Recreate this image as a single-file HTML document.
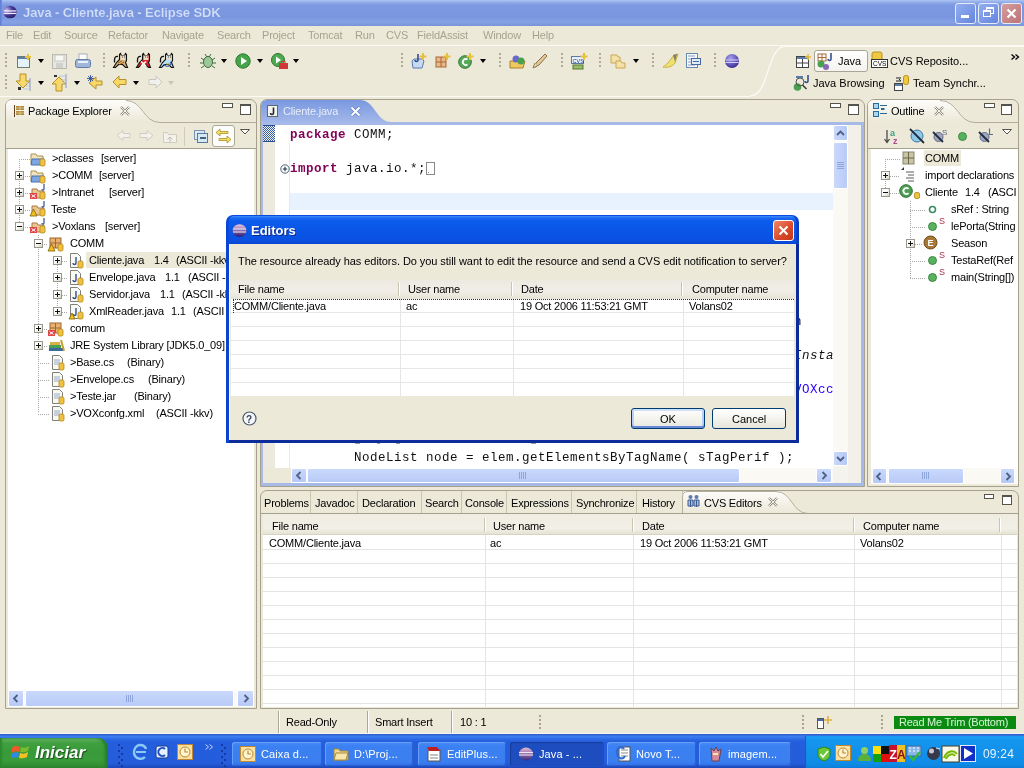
<!DOCTYPE html>
<html><head><meta charset="utf-8">
<style>
*{margin:0;padding:0;box-sizing:border-box}
html,body{width:1024px;height:768px;overflow:hidden;background:#ECE9D8;font-family:"Liberation Sans",sans-serif;font-size:11px;color:#000;position:relative}
.a{position:absolute}
.t{position:absolute;white-space:nowrap;line-height:13px;letter-spacing:-0.2px}
.mono{position:absolute;white-space:nowrap;font-family:"Liberation Mono",monospace;font-size:12.5px;letter-spacing:0.5px;line-height:17px;color:#111}
.kw{color:#7F0055;font-weight:bold}
.menu{color:#A6A491;top:29px}
.panel{position:absolute;border:1px solid #A5A18E;background:#ECE9D8;border-radius:7px 7px 0 0}
.white{position:absolute;background:#fff}
.exp{position:absolute;width:9px;height:9px;border:1px solid #98978C;background:linear-gradient(135deg,#fff 40%,#D6D3C6);}
.exp:before{content:"";position:absolute;left:1px;top:3px;width:5px;height:1px;background:#111}
.exp.p:after{content:"";position:absolute;left:3px;top:1px;width:1px;height:5px;background:#111}
.dv{position:absolute;width:1px;border-left:1px dotted #A8A8A8}
.dh{position:absolute;height:1px;border-top:1px dotted #A8A8A8}
.sbtn{position:absolute;background:linear-gradient(90deg,#C6D5FB,#B9CBF6);border:1px solid #fff;border-radius:2px;box-shadow:0 0 0 1px #D8E2F8}
.gh{position:absolute;height:1px;background:#EBEAE3}
.gv{position:absolute;width:1px;background:#EBEAE3}
.grip{position:absolute;width:2px;height:16px;background:repeating-linear-gradient(#B3AF9C 0 2px,transparent 2px 4px)}
.dd{position:absolute;width:0;height:0;border-left:3px solid transparent;border-right:3px solid transparent;border-top:3px solid #000}
.minb{position:absolute;width:11px;height:5px;border:1px solid #55544C;background:#fff}
.maxb{position:absolute;width:11px;height:11px;border:1px solid #55544C;border-top-width:2px;background:#fff}
svg{position:absolute;overflow:visible}
</style></head><body>

<div style="position:absolute;left:0;top:0;width:1024px;height:768px;overflow:hidden;will-change:transform">
<div class="a" style="left:0px;top:0px;width:1024px;height:26px;background:linear-gradient(#AEC5F3 0,#94AEEA 2px,#7D99E1 5px,#7A96DF 17px,#86A2E5 22px,#7C97DD 25px,#7E93D4 26px)"></div>
<div class="a" style="left:0px;top:0px;width:2px;height:26px;background:linear-gradient(90deg,#5F7AD2,#7591DC)"></div>
<svg style="left:3px;top:5px" width="15" height="14" viewBox="0 0 15 14"><defs><radialGradient id="eg" cx="0.25" cy="0.35" r="0.9"><stop offset="0" stop-color="#C8C0F0"/><stop offset="0.45" stop-color="#4A3C98"/><stop offset="1" stop-color="#1C1458"/></radialGradient></defs><ellipse cx="7" cy="7" rx="6.8" ry="6.3" fill="url(#eg)"/><rect x="0.5" y="5.3" width="13" height="1.3" fill="#EEE8FF"/><rect x="0.5" y="7.8" width="13" height="1.3" fill="#EEE8FF"/></svg>
<div class="t" style="left:23px;top:5px;font-size:13px;font-weight:bold;color:#D3DEF7;line-height:16px;letter-spacing:-0.1px;-webkit-text-stroke:0.15px #7C98E0">Java - Cliente.java - Eclipse SDK</div>
<div class="a" style="left:955px;top:3px;width:21px;height:21px;border:1px solid #E6EBFA;border-radius:3px;background:linear-gradient(135deg,#93AFF0,#6585DD)"></div>
<div class="a" style="left:978px;top:3px;width:21px;height:21px;border:1px solid #E6EBFA;border-radius:3px;background:linear-gradient(135deg,#93AFF0,#6585DD)"></div>
<div class="a" style="left:961px;top:15px;width:8px;height:3px;background:#fff"></div>
<div class="a" style="left:986px;top:7px;width:8px;height:7px;border:1px solid #fff;border-top-width:2px"></div>
<div class="a" style="left:983px;top:10px;width:8px;height:7px;border:1px solid #fff;border-top-width:2px;background:#7C98E2"></div>
<div class="a" style="left:1001px;top:3px;width:21px;height:21px;border:1px solid #E6EBFA;border-radius:3px;background:linear-gradient(135deg,#D69C9C,#BC7478)"></div>
<svg style="left:1005px;top:7px" width="13" height="13" viewBox="0 0 13 13"><path d="M2.5 2.5L10.5 10.5M10.5 2.5L2.5 10.5" stroke="#fff" stroke-width="2.2"/></svg>
<div class="t menu" style="left:6px">File</div>
<div class="t menu" style="left:33px">Edit</div>
<div class="t menu" style="left:64px">Source</div>
<div class="t menu" style="left:108px">Refactor</div>
<div class="t menu" style="left:162px">Navigate</div>
<div class="t menu" style="left:217px">Search</div>
<div class="t menu" style="left:262px">Project</div>
<div class="t menu" style="left:308px">Tomcat</div>
<div class="t menu" style="left:355px">Run</div>
<div class="t menu" style="left:386px">CVS</div>
<div class="t menu" style="left:417px">FieldAssist</div>
<div class="t menu" style="left:483px">Window</div>
<div class="t menu" style="left:532px">Help</div>
<div class="a" style="left:0px;top:45px;width:786px;height:1px;background:#FBFAF5"></div>
<div class="a" style="left:786px;top:45px;width:238px;height:2px;background:#FBFAF5"></div>
<div class="a" style="left:0px;top:96px;width:750px;height:1px;background:#FBFAF5"></div>
<svg style="left:748px;top:45px" width="40" height="52" viewBox="0 0 40 52"><path d="M2 51 C 22 51, 18 1, 38 1" stroke="#FBFAF5" stroke-width="1.3" fill="none"/></svg>
<div class="a" style="left:5px;top:53px;width:2px;height:16px;background:repeating-linear-gradient(#B0AC98 0 2px,transparent 2px 4px)"></div>
<div class="a" style="left:103px;top:53px;width:2px;height:16px;background:repeating-linear-gradient(#B0AC98 0 2px,transparent 2px 4px)"></div>
<div class="a" style="left:188px;top:53px;width:2px;height:16px;background:repeating-linear-gradient(#B0AC98 0 2px,transparent 2px 4px)"></div>
<div class="a" style="left:401px;top:53px;width:2px;height:16px;background:repeating-linear-gradient(#B0AC98 0 2px,transparent 2px 4px)"></div>
<div class="a" style="left:499px;top:53px;width:2px;height:16px;background:repeating-linear-gradient(#B0AC98 0 2px,transparent 2px 4px)"></div>
<div class="a" style="left:561px;top:53px;width:2px;height:16px;background:repeating-linear-gradient(#B0AC98 0 2px,transparent 2px 4px)"></div>
<div class="a" style="left:599px;top:53px;width:2px;height:16px;background:repeating-linear-gradient(#B0AC98 0 2px,transparent 2px 4px)"></div>
<div class="a" style="left:652px;top:53px;width:2px;height:16px;background:repeating-linear-gradient(#B0AC98 0 2px,transparent 2px 4px)"></div>
<div class="a" style="left:714px;top:53px;width:2px;height:16px;background:repeating-linear-gradient(#B0AC98 0 2px,transparent 2px 4px)"></div>
<div class="a" style="left:5px;top:75px;width:2px;height:16px;background:repeating-linear-gradient(#B0AC98 0 2px,transparent 2px 4px)"></div>
<svg style="left:17px;top:54px" width="15" height="14" viewBox="0 0 15 14"><rect x="0.5" y="2.5" width="12" height="11" fill="#E4F2FA" stroke="#6F7A73"/><rect x="1" y="3" width="11" height="2" fill="#5C7FA8"/><path d="M11 0v6M8 3h6" stroke="#E8C040" stroke-width="2"/></svg>
<div class="dd" style="left:38px;top:59px;border-top-color:#000;border-left-width:3px;border-right-width:3px;border-top-width:4px"></div>
<svg style="left:52px;top:54px" width="15" height="15" viewBox="0 0 15 15"><rect x="0.5" y="0.5" width="14" height="14" fill="#E6E6E2" stroke="#B8B8B0"/><rect x="3" y="1" width="9" height="6" fill="#F8F8F6" stroke="#C8C8C0"/><rect x="4" y="9" width="7" height="5" fill="#D0D0CC"/></svg>
<svg style="left:75px;top:53px" width="16" height="16" viewBox="0 0 16 16"><rect x="4" y="1" width="8" height="6" fill="#fff" stroke="#A8B0B8"/><rect x="0.5" y="6.5" width="15" height="8" rx="2" fill="#9FB6D8" stroke="#5F7BA8"/><rect x="3" y="8" width="10" height="2" fill="#E8F0F8"/></svg>
<svg style="left:113px;top:53px" width="16" height="16" viewBox="0 0 16 16"><path d="M6.5 1.5L7.5 0.5 8.5 2.5H11.5L12.5 0.5 13.5 1.5V7.5L12.5 9.5 14.5 14.5H12.5L9.5 11.5H5.5L2.5 14.5H0.5L3.5 9.5Q5.5 7.5 6.5 6.5Z" fill="#D8B070" stroke="#111" stroke-width="1.1"/><path d="M5 3.5Q1.5 3 1.5 7V9.5" stroke="#111" stroke-width="1.3" fill="none"/><rect x="7.5" y="2.5" width="5" height="4.5" fill="#E8DCC8"/><path d="M9 4h.8M11 4h.8" stroke="#222"/><path d="M5 10l4-2M6 12l5-3" stroke="#8A5A20" stroke-width="0.9"/></svg>
<svg style="left:136px;top:53px" width="16" height="16" viewBox="0 0 16 16"><path d="M6.5 1.5L7.5 0.5 8.5 2.5H11.5L12.5 0.5 13.5 1.5V7.5L12.5 9.5 14.5 14.5H12.5L9.5 11.5H5.5L2.5 14.5H0.5L3.5 9.5Q5.5 7.5 6.5 6.5Z" fill="#E02828" stroke="#111" stroke-width="1.1"/><path d="M5 3.5Q1.5 3 1.5 7V9.5" stroke="#111" stroke-width="1.3" fill="none"/><rect x="7.5" y="2.5" width="5" height="4.5" fill="#E8DCC8"/><path d="M9 4h.8M11 4h.8" stroke="#222"/><path d="M5 8.5l5 4.5M10 8.5l-5 4.5" stroke="#fff" stroke-width="1.6"/></svg>
<svg style="left:159px;top:53px" width="16" height="16" viewBox="0 0 16 16"><path d="M6.5 1.5L7.5 0.5 8.5 2.5H11.5L12.5 0.5 13.5 1.5V7.5L12.5 9.5 14.5 14.5H12.5L9.5 11.5H5.5L2.5 14.5H0.5L3.5 9.5Q5.5 7.5 6.5 6.5Z" fill="#B8E0F8" stroke="#111" stroke-width="1.1"/><path d="M5 3.5Q1.5 3 1.5 7V9.5" stroke="#111" stroke-width="1.3" fill="none"/><rect x="7.5" y="2.5" width="5" height="4.5" fill="#E8DCC8"/><path d="M9 4h.8M11 4h.8" stroke="#222"/><path d="M5 11a3.5 2.5 0 1 0 6 -2" stroke="#2A5AA8" stroke-width="1.1" fill="none"/><path d="M7 11h4" stroke="#C8A030"/></svg>
<svg style="left:200px;top:53px" width="15" height="16" viewBox="0 0 15 16"><ellipse cx="8" cy="9" rx="4.5" ry="5.5" fill="#9CC89A" stroke="#3E6B3C"/><path d="M1 5l3 2M15 5l-3 2M0 10h3M13 10h3M1 15l3-2M15 15l-3-2M5 1l2 3M11 1l-2 3" stroke="#3E6B3C"/></svg>
<div class="dd" style="left:221px;top:59px;border-top-color:#000;border-left-width:3px;border-right-width:3px;border-top-width:4px"></div>
<svg style="left:235px;top:53px" width="16" height="16" viewBox="0 0 16 16"><circle cx="8" cy="8" r="7.2" fill="#45A348" stroke="#2A7A30"/><path d="M6 4l6 4-6 4z" fill="#fff"/></svg>
<div class="dd" style="left:257px;top:59px;border-top-color:#000;border-left-width:3px;border-right-width:3px;border-top-width:4px"></div>
<svg style="left:271px;top:53px" width="17" height="17" viewBox="0 0 17 17"><circle cx="7" cy="7" r="6.5" fill="#4FA852" stroke="#2A7A30"/><path d="M5 3.5l5 3.5-5 3.5z" fill="#fff"/><rect x="8" y="10" width="9" height="6" fill="#D03838"/><rect x="11" y="8.5" width="3" height="2" fill="none" stroke="#D03838"/></svg>
<div class="dd" style="left:293px;top:59px;border-top-color:#000;border-left-width:3px;border-right-width:3px;border-top-width:4px"></div>
<svg style="left:411px;top:53px" width="16" height="16" viewBox="0 0 16 16"><path d="M1 8l2-2h8l2 2-2 7H2z" fill="#C8DAF0" stroke="#5A78B8"/><path d="M7 1v6c0 2-3 2-3 0" stroke="#34508F" stroke-width="1.6" fill="none"/><path d="M12 0v7M8.5 3.5h7" stroke="#E8C040" stroke-width="2"/></svg>
<svg style="left:435px;top:53px" width="16" height="16" viewBox="0 0 16 16"><rect x="1" y="4" width="10" height="10" fill="#E8B888" stroke="#A86838"/><path d="M6 4v10M1 9h10" stroke="#A86838"/><path d="M12 0v7M8.5 3.5h7" stroke="#E8C040" stroke-width="2"/></svg>
<svg style="left:458px;top:53px" width="16" height="16" viewBox="0 0 16 16"><circle cx="7" cy="9" r="6.3" fill="#58A85A" stroke="#2F7432"/><path d="M9.5 6.5a3 3 0 1 0 0 5" stroke="#fff" stroke-width="1.8" fill="none"/><path d="M12 0v7M8.5 3.5h7" stroke="#E8C040" stroke-width="2"/></svg>
<div class="dd" style="left:480px;top:59px;border-top-color:#000;border-left-width:3px;border-right-width:3px;border-top-width:4px"></div>
<svg style="left:509px;top:53px" width="17" height="16" viewBox="0 0 17 16"><path d="M1 8h15l-2 7H1z" fill="#F0C860" stroke="#A88028"/><circle cx="7" cy="6" r="3.5" fill="#6A68C8"/><circle cx="12" cy="8" r="3.5" fill="#48A050"/></svg>
<svg style="left:532px;top:53px" width="16" height="16" viewBox="0 0 16 16"><path d="M13 1l2 2-8 9-4 2 1-4z" fill="#E0C898" stroke="#8A7048"/><path d="M3 10l-2 5 4-2" fill="#F0E8C8" stroke="#8A7048"/></svg>
<svg style="left:571px;top:53px" width="16" height="17" viewBox="0 0 16 17"><rect x="0.5" y="3.5" width="12" height="7" fill="#E8F0F8" stroke="#5A78A8"/><text x="1.5" y="9.5" font-size="5.5" font-family="Liberation Sans" fill="#244080">CVS</text><rect x="2" y="12" width="10" height="4" fill="#98C068" stroke="#587830"/><path d="M13 0v7M9.5 3.5h7" stroke="#E8C040" stroke-width="2"/></svg>
<svg style="left:610px;top:54px" width="17" height="15" viewBox="0 0 17 15"><path d="M1 1h6l1 2h2v6H1z" fill="#F4E0A8" stroke="#C8A850"/><path d="M6 7h5l1 2h3v5H6z" fill="#F4E0A8" stroke="#C8A850"/></svg>
<div class="dd" style="left:633px;top:59px;border-top-color:#000;border-left-width:3px;border-right-width:3px;border-top-width:4px"></div>
<svg style="left:661px;top:53px" width="18" height="16" viewBox="0 0 18 16"><path d="M2 14c4 1 9 0 12-4l3-9-4 1-6 8c-2 2-4 3-5 4z" fill="#F0E070" stroke="#C8B040"/><path d="M12 2l4-1-2 8" fill="#808070"/></svg>
<svg style="left:686px;top:53px" width="15" height="16" viewBox="0 0 15 16"><rect x="0.5" y="0.5" width="11" height="14" fill="#F4F8FC" stroke="#6888B0"/><path d="M2 3h7M2 6h7M2 9h7M2 12h7" stroke="#88A0C0"/><rect x="5.5" y="5.5" width="9" height="6" fill="#E0ECF8" stroke="#4868A0"/><path d="M7 8.5h6" stroke="#4868A0"/></svg>
<svg style="left:724px;top:53px" width="16" height="16" viewBox="0 0 16 16"><defs><radialGradient id="eg2" cx="0.4" cy="0.3" r="0.8"><stop offset="0" stop-color="#A8A0F0"/><stop offset="1" stop-color="#2A208A"/></radialGradient></defs><circle cx="8" cy="8" r="7" fill="url(#eg2)"/><path d="M1.5 7h13M1.5 9.5h13" stroke="#D8D0F8" stroke-width="1"/></svg>
<svg style="left:16px;top:74px" width="15" height="17" viewBox="0 0 15 17"><path d="M4 0h6v7h4l-7 7-7-7h4z" fill="#F8D868" stroke="#B89028"/><rect x="2" y="13" width="3" height="3" fill="#303030"/><path d="M7 15h6M10 9h4M10 12h4" stroke="#B8C8E0"/><path d="M14 4v13" stroke="#8898C0"/></svg>
<div class="dd" style="left:38px;top:81px;border-top-color:#000;border-left-width:3px;border-right-width:3px;border-top-width:4px"></div>
<svg style="left:52px;top:74px" width="15" height="18" viewBox="0 0 15 18"><path d="M4 17h6v-7h4l-7-7-7 7h4z" fill="#F8D868" stroke="#B89028"/><rect x="2" y="1" width="3" height="2" fill="#303030"/><path d="M7 2h6M10 6h4M10 9h4" stroke="#B8C8E0"/><path d="M14 0v14" stroke="#8898C0"/></svg>
<div class="dd" style="left:74px;top:81px;border-top-color:#000;border-left-width:3px;border-right-width:3px;border-top-width:4px"></div>
<svg style="left:87px;top:75px" width="16" height="16" viewBox="0 0 16 16"><path d="M15 6H9V2L2 8l7 6v-4h6z" fill="#F8D868" stroke="#B89028"/><path d="M1 1l5 5M6 1L1 6M3.5 0v7M0 3.5h7" stroke="#3050A0" stroke-width="0.9"/></svg>
<svg style="left:112px;top:75px" width="15" height="14" viewBox="0 0 15 14"><path d="M14 4.5H7V1L1 7l6 6V9.5h7z" fill="#F8D868" stroke="#B89028"/></svg>
<div class="dd" style="left:133px;top:81px;border-top-color:#000;border-left-width:3px;border-right-width:3px;border-top-width:4px"></div>
<svg style="left:148px;top:75px" width="15" height="14" viewBox="0 0 15 14"><path d="M1 4.5h7V1l6 6-6 6V9.5H1z" fill="#F0F0EC" stroke="#C8C8C0"/></svg>
<div class="dd" style="left:168px;top:81px;border-top-color:#C8C6B8;border-left-width:3px;border-right-width:3px;border-top-width:4px"></div>
<svg style="left:796px;top:54px" width="16" height="15" viewBox="0 0 16 15"><rect x="0.5" y="2.5" width="12" height="11" fill="#fff" stroke="#444"/><rect x="1" y="3" width="11" height="2" fill="#5C7FA8"/><path d="M6.5 5v8M1 9h11" stroke="#444"/><path d="M12 0v6M9 3h6" stroke="#E8C040" stroke-width="1.6"/></svg>
<div class="a" style="left:814px;top:50px;width:54px;height:22px;border:1px solid #A8A595;border-radius:3px;background:linear-gradient(#FFFFFF,#F4F3EE)"></div>
<svg style="left:817px;top:53px" width="17" height="17" viewBox="0 0 17 17"><rect x="1" y="1" width="8" height="7" fill="none" stroke="#A86838"/><path d="M5 1v7M1 4.5h8" stroke="#A86838"/><circle cx="4" cy="11" r="3.5" fill="#48A050"/><circle cx="9" cy="14" r="3" fill="#8868B8"/><path d="M14 0v6c0 2-3 2-3 0" stroke="#34508F" stroke-width="1.6" fill="none"/></svg>
<div class="t" style="left:838px;top:55px;letter-spacing:0">Java</div>
<svg style="left:871px;top:51px" width="17" height="17" viewBox="0 0 17 17"><rect x="1" y="1" width="10" height="10" rx="2" fill="#F0C840" stroke="#B89020"/><rect x="0.5" y="8.5" width="16" height="8" fill="#fff" stroke="#333"/><text x="2" y="15" font-size="6.5" font-family="Liberation Sans" fill="#000">CVS</text></svg>
<div class="t" style="left:890px;top:55px;letter-spacing:0">CVS Reposito...</div>
<svg style="left:1011px;top:54px" width="8" height="6" viewBox="0 0 8 6"><path d="M0.5 0.5l3 2.5-3 2.5M4.5 0.5l3 2.5-3 2.5" stroke="#000" stroke-width="1.3" fill="none"/></svg>
<svg style="left:793px;top:74px" width="17" height="17" viewBox="0 0 17 17"><circle cx="4.5" cy="13" r="3.8" fill="#48A050"/><circle cx="7" cy="8" r="4" fill="none" stroke="#555"/><path d="M9.5 11l4 4" stroke="#333" stroke-width="1.5"/><path d="M3 3h7" stroke="#5A78A8" stroke-width="2"/><path d="M15 1v6c0 2-3 2-3 0" stroke="#34508F" stroke-width="1.6" fill="none"/></svg>
<div class="t" style="left:813px;top:77px;letter-spacing:0">Java Browsing</div>
<svg style="left:894px;top:75px" width="16" height="16" viewBox="0 0 16 16"><rect x="0.5" y="8.5" width="8" height="7" fill="#fff" stroke="#444"/><rect x="1" y="9" width="7" height="2" fill="#5C7FA8"/><rect x="9.5" y="0.5" width="5" height="9" rx="2" fill="#F0C840" stroke="#B89020"/><path d="M2 6h5l-2-2M7 3H2" stroke="#222" fill="none"/></svg>
<div class="t" style="left:913px;top:77px;letter-spacing:0">Team Synchr...</div>
<div class="a" style="left:5px;top:99px;width:252px;height:610px;border:1px solid #A5A18E;border-radius:7px 7px 0 0;background:#ECE9D8"></div>
<svg style="left:6px;top:100px" width="250" height="23" viewBox="0 0 250 23"><defs><linearGradient id="tabg" x1="0" y1="0" x2="0" y2="1"><stop offset="0" stop-color="#FDFCFA"/><stop offset="1" stop-color="#ECE9D8"/></linearGradient></defs><path d="M0 22 V6 Q0 0 6 0 H120 C137 0 137 22 154 22 Z" fill="url(#tabg)"/><path d="M120 0.5 C137 0.5 137 22.5 154 22.5 H250" stroke="#B2AE9B" fill="none"/></svg>
<svg style="left:13px;top:105px" width="11" height="12" viewBox="0 0 11 12"><path d="M1.5 0v12" stroke="#604020"/><rect x="3" y="1" width="8" height="4" fill="#B08838"/><rect x="3" y="6" width="8" height="4" fill="#B08838"/><path d="M3 3h8M7 1v9M3 8h8" stroke="#E8D8A8" stroke-width="0.7"/></svg>
<div class="t" style="left:28px;top:105px;">Package Explorer</div>
<svg style="left:120px;top:106px" width="10" height="10" viewBox="0 0 10 10"><path d="M1 1l8 8M9 1L1 9" stroke="#8E8C80" stroke-width="2.4"/><path d="M1 1l8 8M9 1L1 9" stroke="#fff" stroke-width="0.9"/></svg>
<div class="minb" style="left:222px;top:103px;width:11px;height:5px"></div>
<div class="maxb" style="left:240px;top:104px"></div>
<svg style="left:116px;top:130px" width="15" height="11" viewBox="0 0 15 11"><path d="M14 3.5H7V0.5L1 5.5l6 5V7.5h7z" fill="#F2F1EC" stroke="#CFCDC0"/></svg>
<svg style="left:139px;top:130px" width="15" height="11" viewBox="0 0 15 11"><path d="M1 3.5h7V0.5l6 5-6 5V7.5H1z" fill="#F2F1EC" stroke="#CFCDC0"/></svg>
<svg style="left:163px;top:129px" width="14" height="14" viewBox="0 0 14 14"><path d="M0.5 3.5h4l1 2h8v8h-13z" fill="#F2F1EC" stroke="#CFCDC0"/><path d="M7 13V8M4.5 10.5L7 8l2.5 2.5" stroke="#C0BEB0" fill="none"/></svg>
<div class="a" style="left:184px;top:127px;width:1px;height:19px;background:#CFCBB8"></div>
<svg style="left:194px;top:130px" width="14" height="13" viewBox="0 0 14 13"><rect x="0.5" y="0.5" width="10" height="9" fill="#D8E8F4" stroke="#7C94AE"/><rect x="3.5" y="3.5" width="10" height="9" fill="#D4EAF6" stroke="#5B7896"/><path d="M6 8h6" stroke="#1B3350" stroke-width="1.5"/></svg>
<div class="a" style="left:212px;top:125px;width:23px;height:22px;border:1px solid #ABA896;border-radius:3px;background:#FCFCFA"></div>
<svg style="left:215px;top:128px" width="17" height="16" viewBox="0 0 17 16"><path d="M1 4.5L5 1v2.5h8v2H5V8z" fill="#F4E060" stroke="#A8902A" stroke-width="0.8"/><path d="M16 11.5L12 8v2.5H4v2h8V15z" fill="#F4E060" stroke="#A8902A" stroke-width="0.8"/></svg>
<svg style="left:240px;top:129px" width="10" height="6" viewBox="0 0 10 6"><path d="M0.5 0.5h9L5 5z" fill="#fff" stroke="#55544C"/></svg>
<div class="a" style="left:6px;top:148px;width:250px;height:1px;background:#A5A18E"></div>
<div class="a" style="left:8px;top:149px;width:246px;height:558px;background:#fff"></div>
<div class="a" style="left:8px;top:690px;width:246px;height:17px;background:#FAF9F5"></div>
<div class="a" style="left:8px;top:690px;width:16px;height:17px;background:linear-gradient(#CCDAFC,#B7C9F6);border:1px solid #fff;border-radius:2px"></div>
<svg style="left:12px;top:694px" width="8" height="9" viewBox="0 0 8 9"><path d="M5.5 1L2 4.5 5.5 8" stroke="#4D6185" stroke-width="1.8" fill="none"/></svg>
<div class="a" style="left:25px;top:690px;width:209px;height:17px;background:linear-gradient(#C9D8FC,#B8CBF7);border:1px solid #fff;border-radius:2px"></div>
<div class="a" style="left:126px;top:695px;width:1px;height:7px;background:#8FA6DC"></div>
<div class="a" style="left:128px;top:695px;width:1px;height:7px;background:#8FA6DC"></div>
<div class="a" style="left:130px;top:695px;width:1px;height:7px;background:#8FA6DC"></div>
<div class="a" style="left:132px;top:695px;width:1px;height:7px;background:#8FA6DC"></div>
<div class="a" style="left:237px;top:690px;width:17px;height:17px;background:linear-gradient(#CCDAFC,#B7C9F6);border:1px solid #fff;border-radius:2px"></div>
<svg style="left:242px;top:694px" width="8" height="9" viewBox="0 0 8 9"><path d="M2.5 1L6 4.5 2.5 8" stroke="#4D6185" stroke-width="1.8" fill="none"/></svg>
<div class="a" style="left:86px;top:252px;width:150px;height:16px;background:#ECE9D8"></div>
<div class="a" style="left:19px;top:159px;width:1px;height:67px;background:repeating-linear-gradient(#A8A8A8 0 1px,transparent 1px 2px)"></div>
<div class="a" style="left:19px;top:159px;width:11px;height:1px;background:repeating-linear-gradient(90deg,#A8A8A8 0 1px,transparent 1px 2px)"></div>
<div class="a" style="left:25px;top:176px;width:5px;height:1px;background:repeating-linear-gradient(90deg,#A8A8A8 0 1px,transparent 1px 2px)"></div>
<div class="a" style="left:25px;top:193px;width:5px;height:1px;background:repeating-linear-gradient(90deg,#A8A8A8 0 1px,transparent 1px 2px)"></div>
<div class="a" style="left:25px;top:210px;width:5px;height:1px;background:repeating-linear-gradient(90deg,#A8A8A8 0 1px,transparent 1px 2px)"></div>
<div class="a" style="left:25px;top:227px;width:5px;height:1px;background:repeating-linear-gradient(90deg,#A8A8A8 0 1px,transparent 1px 2px)"></div>
<div class="a" style="left:38px;top:235px;width:1px;height:110px;background:repeating-linear-gradient(#A8A8A8 0 1px,transparent 1px 2px)"></div>
<div class="a" style="left:44px;top:244px;width:4px;height:1px;background:repeating-linear-gradient(90deg,#A8A8A8 0 1px,transparent 1px 2px)"></div>
<div class="a" style="left:44px;top:329px;width:4px;height:1px;background:repeating-linear-gradient(90deg,#A8A8A8 0 1px,transparent 1px 2px)"></div>
<div class="a" style="left:44px;top:346px;width:4px;height:1px;background:repeating-linear-gradient(90deg,#A8A8A8 0 1px,transparent 1px 2px)"></div>
<div class="a" style="left:38px;top:363px;width:12px;height:1px;background:repeating-linear-gradient(90deg,#A8A8A8 0 1px,transparent 1px 2px)"></div>
<div class="a" style="left:38px;top:380px;width:12px;height:1px;background:repeating-linear-gradient(90deg,#A8A8A8 0 1px,transparent 1px 2px)"></div>
<div class="a" style="left:38px;top:397px;width:12px;height:1px;background:repeating-linear-gradient(90deg,#A8A8A8 0 1px,transparent 1px 2px)"></div>
<div class="a" style="left:38px;top:414px;width:12px;height:1px;background:repeating-linear-gradient(90deg,#A8A8A8 0 1px,transparent 1px 2px)"></div>
<div class="a" style="left:38px;top:345px;width:1px;height:68px;background:repeating-linear-gradient(#A8A8A8 0 1px,transparent 1px 2px)"></div>
<div class="a" style="left:57px;top:261px;width:1px;height:51px;background:repeating-linear-gradient(#A8A8A8 0 1px,transparent 1px 2px)"></div>
<div class="a" style="left:62px;top:261px;width:6px;height:1px;background:repeating-linear-gradient(90deg,#A8A8A8 0 1px,transparent 1px 2px)"></div>
<div class="a" style="left:62px;top:278px;width:6px;height:1px;background:repeating-linear-gradient(90deg,#A8A8A8 0 1px,transparent 1px 2px)"></div>
<div class="a" style="left:62px;top:295px;width:6px;height:1px;background:repeating-linear-gradient(90deg,#A8A8A8 0 1px,transparent 1px 2px)"></div>
<div class="a" style="left:62px;top:312px;width:6px;height:1px;background:repeating-linear-gradient(90deg,#A8A8A8 0 1px,transparent 1px 2px)"></div>
<div class="exp p" style="left:15px;top:171px"></div>
<div class="exp p" style="left:15px;top:188px"></div>
<div class="exp p" style="left:15px;top:205px"></div>
<div class="exp" style="left:15px;top:222px"></div>
<div class="exp" style="left:34px;top:239px"></div>
<div class="exp p" style="left:34px;top:324px"></div>
<div class="exp p" style="left:34px;top:341px"></div>
<div class="exp p" style="left:53px;top:256px"></div>
<div class="exp p" style="left:53px;top:273px"></div>
<div class="exp p" style="left:53px;top:290px"></div>
<div class="exp p" style="left:53px;top:307px"></div>
<svg style="left:30px;top:151px" width="16" height="16" viewBox="0 0 16 16"><path d="M1 3h5l1 2h6v8H1z" fill="#F2E4B8" stroke="#A89058"/><path d="M2 8h12l-2 6H1z" fill="#7EA6E0" stroke="#4A70B0"/><rect x="10" y="8" width="5" height="7" rx="1.5" fill="#F0C040" stroke="#B08820" stroke-width="0.8"/></svg>
<svg style="left:30px;top:168px" width="16" height="16" viewBox="0 0 16 16"><path d="M1 3h5l1 2h6v8H1z" fill="#F2E4B8" stroke="#A89058"/><path d="M2 8h12l-2 6H1z" fill="#7EA6E0" stroke="#4A70B0"/><rect x="10" y="8" width="5" height="7" rx="1.5" fill="#F0C040" stroke="#B08820" stroke-width="0.8"/></svg>
<svg style="left:30px;top:184px" width="17" height="17" viewBox="0 0 17 17"><path d="M2 5h5l1 2h6v7H2z" fill="#E8C890" stroke="#A87848"/><path d="M14 0v5c0 1.5-2 1.5-2 0" stroke="#34508F" stroke-width="1.2" fill="none"/><rect x="0" y="9" width="7" height="6" fill="#E04848"/><path d="M1.5 10.5l4 3M5.5 10.5l-4 3" stroke="#fff"/><rect x="10" y="8" width="5" height="7" rx="1.5" fill="#F0C040" stroke="#B08820" stroke-width="0.8"/></svg>
<svg style="left:30px;top:201px" width="17" height="17" viewBox="0 0 17 17"><path d="M2 5h5l1 2h6v7H2z" fill="#E8C890" stroke="#A87848"/><path d="M14 0v5c0 1.5-2 1.5-2 0" stroke="#34508F" stroke-width="1.2" fill="none"/><path d="M3.5 8L0 15h7z" fill="#F0C020" stroke="#806000" stroke-width="0.8"/><rect x="10" y="8" width="5" height="7" rx="1.5" fill="#F0C040" stroke="#B08820" stroke-width="0.8"/></svg>
<svg style="left:30px;top:218px" width="17" height="17" viewBox="0 0 17 17"><path d="M2 5h5l1 2h6v7H2z" fill="#E8C890" stroke="#A87848"/><path d="M14 0v5c0 1.5-2 1.5-2 0" stroke="#34508F" stroke-width="1.2" fill="none"/><rect x="0" y="9" width="7" height="6" fill="#E04848"/><path d="M1.5 10.5l4 3M5.5 10.5l-4 3" stroke="#fff"/><rect x="10" y="8" width="5" height="7" rx="1.5" fill="#F0C040" stroke="#B08820" stroke-width="0.8"/></svg>
<svg style="left:48px;top:236px" width="16" height="16" viewBox="0 0 16 16"><rect x="2" y="2" width="11" height="10" fill="#E8B070" stroke="#A06830"/><path d="M7.5 2v10M2 7h11" stroke="#A06830"/><path d="M3.5 8L0 15h7z" fill="#F0C020" stroke="#806000" stroke-width="0.8"/><rect x="10" y="8" width="5" height="7" rx="1.5" fill="#F0C040" stroke="#B08820" stroke-width="0.8"/></svg>
<svg style="left:69px;top:253px" width="15" height="16" viewBox="0 0 15 16"><path d="M1.5 0.5h7l3 3v11h-10z" fill="#F8F8F4" stroke="#808078"/><path d="M7 4v6c0 2-3 2-3 0" stroke="#34508F" stroke-width="1.4" fill="none"/><rect x="9" y="8" width="5" height="7" rx="1.5" fill="#F0C040" stroke="#B08820" stroke-width="0.8"/></svg>
<svg style="left:69px;top:270px" width="15" height="16" viewBox="0 0 15 16"><path d="M1.5 0.5h7l3 3v11h-10z" fill="#F8F8F4" stroke="#808078"/><path d="M7 4v6c0 2-3 2-3 0" stroke="#34508F" stroke-width="1.4" fill="none"/><rect x="9" y="8" width="5" height="7" rx="1.5" fill="#F0C040" stroke="#B08820" stroke-width="0.8"/></svg>
<svg style="left:69px;top:287px" width="15" height="16" viewBox="0 0 15 16"><path d="M1.5 0.5h7l3 3v11h-10z" fill="#F8F8F4" stroke="#808078"/><path d="M7 4v6c0 2-3 2-3 0" stroke="#34508F" stroke-width="1.4" fill="none"/><rect x="9" y="8" width="5" height="7" rx="1.5" fill="#F0C040" stroke="#B08820" stroke-width="0.8"/></svg>
<svg style="left:69px;top:304px" width="15" height="16" viewBox="0 0 15 16"><path d="M1.5 0.5h7l3 3v11h-10z" fill="#F8F8F4" stroke="#808078"/><path d="M7 4v6c0 2-3 2-3 0" stroke="#34508F" stroke-width="1.4" fill="none"/><path d="M3 9L0 15h6z" fill="#F0C020" stroke="#806000" stroke-width="0.8"/><rect x="9" y="8" width="5" height="7" rx="1.5" fill="#F0C040" stroke="#B08820" stroke-width="0.8"/></svg>
<svg style="left:48px;top:321px" width="16" height="16" viewBox="0 0 16 16"><rect x="2" y="2" width="11" height="10" fill="#E8B070" stroke="#A06830"/><path d="M7.5 2v10M2 7h11" stroke="#A06830"/><rect x="0" y="9" width="7" height="6" fill="#E04848"/><path d="M1.5 10.5l4 3M5.5 10.5l-4 3" stroke="#fff"/><rect x="10" y="8" width="5" height="7" rx="1.5" fill="#F0C040" stroke="#B08820" stroke-width="0.8"/></svg>
<svg style="left:49px;top:339px" width="16" height="14" viewBox="0 0 16 14"><rect x="0" y="9" width="14" height="3" fill="#3A6A9A"/><rect x="0" y="6" width="12" height="3" fill="#48A050"/><rect x="1" y="3" width="10" height="3" fill="#D8B048"/><path d="M12 1l3 11" stroke="#C8A030" stroke-width="2"/></svg>
<svg style="left:51px;top:355px" width="14" height="16" viewBox="0 0 14 16"><path d="M1.5 0.5h7l3 3v11h-10z" fill="#F8F8F4" stroke="#808078"/><path d="M3 5h6M3 7h6M3 9h6" stroke="#98A8C8"/><rect x="8" y="8" width="5" height="7" rx="1.5" fill="#F0C040" stroke="#B08820" stroke-width="0.8"/></svg>
<svg style="left:51px;top:372px" width="14" height="16" viewBox="0 0 14 16"><path d="M1.5 0.5h7l3 3v11h-10z" fill="#F8F8F4" stroke="#808078"/><path d="M3 5h6M3 7h6M3 9h6" stroke="#98A8C8"/><rect x="8" y="8" width="5" height="7" rx="1.5" fill="#F0C040" stroke="#B08820" stroke-width="0.8"/></svg>
<svg style="left:51px;top:389px" width="14" height="16" viewBox="0 0 14 16"><path d="M1.5 0.5h7l3 3v11h-10z" fill="#F8F8F4" stroke="#808078"/><path d="M3 5h6M3 7h6M3 9h6" stroke="#98A8C8"/><rect x="8" y="8" width="5" height="7" rx="1.5" fill="#F0C040" stroke="#B08820" stroke-width="0.8"/></svg>
<svg style="left:51px;top:406px" width="14" height="16" viewBox="0 0 14 16"><path d="M1.5 0.5h7l3 3v11h-10z" fill="#F8F8F4" stroke="#808078"/><path d="M3 5h6M3 7h6M3 9h6" stroke="#98A8C8"/><rect x="8" y="8" width="5" height="7" rx="1.5" fill="#F0C040" stroke="#B08820" stroke-width="0.8"/></svg>
<div class="t" style="left:52px;top:152px;">&gt;classes</div>
<div class="t" style="left:101px;top:152px;">[server]</div>
<div class="t" style="left:52px;top:169px;">&gt;COMM</div>
<div class="t" style="left:99px;top:169px;">[server]</div>
<div class="t" style="left:52px;top:186px;">&gt;Intranet</div>
<div class="t" style="left:109px;top:186px;">[server]</div>
<div class="t" style="left:51px;top:203px;">Teste</div>
<div class="t" style="left:52px;top:220px;">&gt;Voxlans</div>
<div class="t" style="left:105px;top:220px;">[server]</div>
<div class="t" style="left:70px;top:237px;">COMM</div>
<div class="t" style="left:89px;top:254px;">Cliente.java</div>
<div class="t" style="left:154px;top:254px;">1.4</div>
<div class="t" style="left:176px;top:254px;">(ASCII -kkv</div>
<div class="t" style="left:89px;top:271px;">Envelope.java</div>
<div class="t" style="left:165px;top:271px;">1.1</div>
<div class="t" style="left:188px;top:271px;">(ASCII -kkv</div>
<div class="t" style="left:89px;top:288px;">Servidor.java</div>
<div class="t" style="left:160px;top:288px;">1.1</div>
<div class="t" style="left:182px;top:288px;">(ASCII -kkv</div>
<div class="t" style="left:89px;top:305px;">XmlReader.java</div>
<div class="t" style="left:171px;top:305px;">1.1</div>
<div class="t" style="left:193px;top:305px;">(ASCII -kkv</div>
<div class="t" style="left:70px;top:322px;">comum</div>
<div class="t" style="left:70px;top:339px;">JRE System Library [JDK5.0_09]</div>
<div class="t" style="left:70px;top:356px;">&gt;Base.cs</div>
<div class="t" style="left:127px;top:356px;">(Binary)</div>
<div class="t" style="left:70px;top:373px;">&gt;Envelope.cs</div>
<div class="t" style="left:148px;top:373px;">(Binary)</div>
<div class="t" style="left:70px;top:390px;">&gt;Teste.jar</div>
<div class="t" style="left:134px;top:390px;">(Binary)</div>
<div class="t" style="left:70px;top:407px;">&gt;VOXconfg.xml</div>
<div class="t" style="left:156px;top:407px;">(ASCII -kkv)</div>
<div class="a" style="left:260px;top:99px;width:605px;height:388px;border:1px solid #A5A18E;border-radius:7px 7px 0 0;background:#ECE9D8"></div>
<svg style="left:261px;top:100px" width="603" height="25" viewBox="0 0 603 25"><defs><linearGradient id="etab" x1="0" y1="0" x2="0" y2="1"><stop offset="0" stop-color="#7898E0"/><stop offset="1" stop-color="#A9BCEA"/></linearGradient></defs><path d="M0 25 V6 Q0 0 6 0 H99 C114 0 115 22 130 22 H603 V25 Z" fill="url(#etab)"/><path d="M130 22 H603 V25 H0 Z" fill="#A7B9E6"/></svg>
<div class="a" style="left:261px;top:122px;width:2px;height:364px;background:#A7B9E6"></div>
<div class="a" style="left:861px;top:122px;width:3px;height:364px;background:#A7B9E6"></div>
<div class="a" style="left:261px;top:483px;width:603px;height:3px;background:#A7B9E6"></div>
<svg style="left:267px;top:105px" width="11" height="12" viewBox="0 0 11 12"><rect x="0.5" y="0.5" width="10" height="11" fill="#F4F4F0" stroke="#606870"/><path d="M6.5 2.5v5.5c0 2-3 2-3 0" stroke="#202830" stroke-width="1.6" fill="none"/></svg>
<div class="t" style="left:283px;top:105px;color:#E6ECFA">Cliente.java</div>
<svg style="left:350px;top:106px" width="11" height="11" viewBox="0 0 11 11"><path d="M1.5 1.5l8 8M9.5 1.5l-8 8" stroke="#5B78C0" stroke-width="3.2"/><path d="M1.5 1.5l8 8M9.5 1.5l-8 8" stroke="#fff" stroke-width="2"/></svg>
<div class="minb" style="left:830px;top:103px;width:11px;height:5px"></div>
<div class="maxb" style="left:848px;top:104px"></div>
<div class="a" style="left:264px;top:125px;width:597px;height:358px;background:#fff"></div>
<div class="a" style="left:263px;top:125px;width:12px;height:343px;background:#ECEADF"></div>
<div class="a" style="left:263px;top:125px;width:12px;height:17px;background:repeating-conic-gradient(#3A5C9E 0 25%,#EEF2FA 0 50%) 0 0/2px 2px;border-top:1px solid #2E4C88;border-bottom:1px solid #2E4C88"></div>
<div class="a" style="left:289px;top:143px;width:1px;height:325px;background:#E8E8E4"></div>
<div class="a" style="left:290px;top:193px;width:543px;height:17px;background:#E8F2FE"></div>
<div class="mono" style="left:290px;top:127px;"><span class="kw">package</span> COMM;</div>
<div class="mono" style="left:290px;top:161px;"><span class="kw">import</span> java.io.*;</div>
<div class="a" style="left:426px;top:162px;width:9px;height:13px;border:1px solid #888;background:#fff"></div>
<div class="a" style="left:428px;top:172px;width:1px;height:1px;background:#888"></div>
<svg style="left:280px;top:164px" width="10" height="10" viewBox="0 0 10 10"><circle cx="5" cy="5" r="4.2" fill="#fff" stroke="#4A6078" stroke-width="1"/><path d="M2.8 5h4.4M5 2.8v4.4" stroke="#20303F" stroke-width="1.1"/></svg>
<div class="mono" style="left:290px;top:314px;">&nbsp;&nbsp;&nbsp;&nbsp;&nbsp;&nbsp;&nbsp;&nbsp;&nbsp;&nbsp;&nbsp;&nbsp;&nbsp;&nbsp;&nbsp;&nbsp;&nbsp;&nbsp;&nbsp;&nbsp;&nbsp;&nbsp;&nbsp;&nbsp;&nbsp;&nbsp;&nbsp;&nbsp;&nbsp;&nbsp;&nbsp;&nbsp;&nbsp;&nbsp;&nbsp;&nbsp;&nbsp;&nbsp;&nbsp;&nbsp;&nbsp;&nbsp;&nbsp;&nbsp;&nbsp;&nbsp;&nbsp;&nbsp;&nbsp;&nbsp;&nbsp;&nbsp;&nbsp;&nbsp;&nbsp;&nbsp;&nbsp;&nbsp;&nbsp;&nbsp;&nbsp;&nbsp;&nbsp;n</div>
<div class="mono" style="left:290px;top:348px;">&nbsp;&nbsp;&nbsp;&nbsp;&nbsp;&nbsp;&nbsp;&nbsp;&nbsp;&nbsp;&nbsp;&nbsp;&nbsp;&nbsp;&nbsp;&nbsp;&nbsp;&nbsp;&nbsp;&nbsp;&nbsp;&nbsp;&nbsp;&nbsp;&nbsp;&nbsp;&nbsp;&nbsp;&nbsp;&nbsp;&nbsp;&nbsp;&nbsp;&nbsp;&nbsp;&nbsp;&nbsp;&nbsp;&nbsp;&nbsp;&nbsp;&nbsp;&nbsp;&nbsp;&nbsp;&nbsp;&nbsp;&nbsp;&nbsp;&nbsp;&nbsp;&nbsp;&nbsp;&nbsp;&nbsp;&nbsp;&nbsp;&nbsp;&nbsp;&nbsp;&nbsp;&nbsp;&nbsp;<i>Insta</i></div>
<div class="mono" style="left:290px;top:382px;">&nbsp;&nbsp;&nbsp;&nbsp;&nbsp;&nbsp;&nbsp;&nbsp;&nbsp;&nbsp;&nbsp;&nbsp;&nbsp;&nbsp;&nbsp;&nbsp;&nbsp;&nbsp;&nbsp;&nbsp;&nbsp;&nbsp;&nbsp;&nbsp;&nbsp;&nbsp;&nbsp;&nbsp;&nbsp;&nbsp;&nbsp;&nbsp;&nbsp;&nbsp;&nbsp;&nbsp;&nbsp;&nbsp;&nbsp;&nbsp;&nbsp;&nbsp;&nbsp;&nbsp;&nbsp;&nbsp;&nbsp;&nbsp;&nbsp;&nbsp;&nbsp;&nbsp;&nbsp;&nbsp;&nbsp;&nbsp;&nbsp;&nbsp;&nbsp;&nbsp;&nbsp;&nbsp;&nbsp;<span style="color:#2A00FF">VOXcc</span></div>
<div class="a" style="left:355px;top:443px;width:5px;height:1px;background:#9A9A9A"></div>
<div class="a" style="left:377px;top:443px;width:3px;height:1px;background:#9A9A9A"></div>
<div class="a" style="left:396px;top:443px;width:4px;height:1px;background:#9A9A9A"></div>
<div class="a" style="left:531px;top:443px;width:5px;height:1px;background:#9A9A9A"></div>
<div class="mono" style="left:354px;top:450px;">NodeList node = elem.getElementsByTagName( sTagPerif );</div>
<div class="a" style="left:833px;top:125px;width:15px;height:343px;background:#FAF9F4"></div>
<div class="a" style="left:833px;top:125px;width:15px;height:16px;background:linear-gradient(90deg,#C9D8FC,#B6C8F5);border:1px solid #fff;border-radius:2px"></div>
<svg style="left:836px;top:130px" width="9" height="6" viewBox="0 0 9 6"><path d="M1 5L4.5 1.5 8 5" stroke="#4D6185" stroke-width="1.8" fill="none"/></svg>
<div class="a" style="left:833px;top:142px;width:15px;height:47px;background:linear-gradient(90deg,#C9D8FC,#B8CAF6);border:1px solid #fff;border-radius:2px"></div>
<div class="a" style="left:837px;top:162px;width:7px;height:1px;background:#8FA6DC"></div>
<div class="a" style="left:837px;top:164px;width:7px;height:1px;background:#8FA6DC"></div>
<div class="a" style="left:837px;top:166px;width:7px;height:1px;background:#8FA6DC"></div>
<div class="a" style="left:837px;top:168px;width:7px;height:1px;background:#8FA6DC"></div>
<div class="a" style="left:833px;top:451px;width:15px;height:15px;background:linear-gradient(90deg,#C9D8FC,#B6C8F5);border:1px solid #fff;border-radius:2px"></div>
<svg style="left:836px;top:456px" width="9" height="6" viewBox="0 0 9 6"><path d="M1 1L4.5 4.5 8 1" stroke="#4D6185" stroke-width="1.8" fill="none"/></svg>
<div class="a" style="left:848px;top:125px;width:13px;height:358px;background:#F2F0E8"></div>
<div class="a" style="left:264px;top:468px;width:27px;height:15px;background:#ECE9D8"></div>
<div class="a" style="left:291px;top:468px;width:542px;height:15px;background:#FAF9F4"></div>
<div class="a" style="left:291px;top:468px;width:16px;height:15px;background:linear-gradient(#C9D8FC,#B6C8F5);border:1px solid #fff;border-radius:2px"></div>
<svg style="left:295px;top:471px" width="8" height="9" viewBox="0 0 8 9"><path d="M5.5 1L2 4.5 5.5 8" stroke="#4D6185" stroke-width="1.8" fill="none"/></svg>
<div class="a" style="left:307px;top:468px;width:433px;height:15px;background:linear-gradient(#C9D8FC,#B8CAF6);border:1px solid #fff;border-radius:2px"></div>
<div class="a" style="left:519px;top:472px;width:1px;height:7px;background:#8FA6DC"></div>
<div class="a" style="left:521px;top:472px;width:1px;height:7px;background:#8FA6DC"></div>
<div class="a" style="left:523px;top:472px;width:1px;height:7px;background:#8FA6DC"></div>
<div class="a" style="left:525px;top:472px;width:1px;height:7px;background:#8FA6DC"></div>
<div class="a" style="left:816px;top:468px;width:16px;height:15px;background:linear-gradient(#C9D8FC,#B6C8F5);border:1px solid #fff;border-radius:2px"></div>
<svg style="left:820px;top:471px" width="8" height="9" viewBox="0 0 8 9"><path d="M2.5 1L6 4.5 2.5 8" stroke="#4D6185" stroke-width="1.8" fill="none"/></svg>
<div class="a" style="left:833px;top:466px;width:15px;height:17px;background:#F4F3EE"></div>
<div class="a" style="left:867px;top:99px;width:152px;height:388px;border:1px solid #A5A18E;border-radius:7px 7px 0 0;background:#ECE9D8"></div>
<svg style="left:868px;top:100px" width="150" height="23" viewBox="0 0 150 23"><path d="M0 22 V6 Q0 0 6 0 H72 C90 0 90 22 107 22 Z" fill="url(#tabg)"/><path d="M72 0.5 C90 0.5 90 22.5 107 22.5 H150" stroke="#B2AE9B" fill="none"/></svg>
<svg style="left:873px;top:103px" width="15" height="14" viewBox="0 0 15 14"><rect x="0.5" y="0.5" width="5" height="5" fill="#A8D8F0" stroke="#2A6A98"/><rect x="0.5" y="8.5" width="5" height="5" fill="#A8D8F0" stroke="#2A6A98"/><path d="M7 2.5h7M9 6h3M7 10.5h7" stroke="#2A6A98" stroke-width="1.2"/><rect x="8" y="5" width="3" height="2" fill="#2A6A98"/></svg>
<div class="t" style="left:891px;top:105px;">Outline</div>
<svg style="left:934px;top:106px" width="10" height="10" viewBox="0 0 10 10"><path d="M1 1l8 8M9 1L1 9" stroke="#8E8C80" stroke-width="2.4"/><path d="M1 1l8 8M9 1L1 9" stroke="#fff" stroke-width="0.9"/></svg>
<div class="minb" style="left:984px;top:103px;width:11px;height:5px"></div>
<div class="maxb" style="left:1001px;top:104px"></div>
<svg style="left:884px;top:128px" width="18" height="16" viewBox="0 0 18 16"><path d="M3 2v12M0.5 11L3 14.5 5.5 11" stroke="#404040" stroke-width="1.2" fill="none"/><text x="6" y="8" font-size="9" font-weight="bold" font-family="Liberation Sans" fill="#38A088">a</text><text x="9" y="15.5" font-size="9" font-weight="bold" font-family="Liberation Sans" fill="#B04898">z</text></svg>
<svg style="left:909px;top:128px" width="16" height="16" viewBox="0 0 16 16"><circle cx="8" cy="8" r="6" fill="#90C8E8" stroke="#3A78A8"/><path d="M1 1l14 14" stroke="#202C3C" stroke-width="1.8"/></svg>
<svg style="left:932px;top:128px" width="16" height="16" viewBox="0 0 16 16"><circle cx="6.5" cy="9" r="4.5" fill="#A0A8C0" stroke="#606888"/><path d="M1 4l10 10" stroke="#202C3C" stroke-width="1.8"/><text x="10" y="6.5" font-size="8" font-family="Liberation Sans" fill="#5A6A80">S</text></svg>
<svg style="left:958px;top:132px" width="9" height="9" viewBox="0 0 9 9"><circle cx="4.5" cy="4.5" r="4" fill="#58B060" stroke="#3A8A40"/></svg>
<svg style="left:978px;top:128px" width="16" height="16" viewBox="0 0 16 16"><circle cx="6.5" cy="9" r="4.5" fill="#A0A8C0" stroke="#606888"/><path d="M1 4l10 10" stroke="#202C3C" stroke-width="1.8"/><path d="M11.5 0.5v6h3.5" stroke="#5A6A80" stroke-width="1.2" fill="none"/></svg>
<svg style="left:1002px;top:129px" width="10" height="6" viewBox="0 0 10 6"><path d="M0.5 0.5h9L5 5z" fill="#fff" stroke="#55544C"/></svg>
<div class="a" style="left:868px;top:148px;width:150px;height:1px;background:#A5A18E"></div>
<div class="a" style="left:871px;top:149px;width:146px;height:335px;background:#fff"></div>
<div class="a" style="left:871px;top:468px;width:146px;height:16px;background:#FAF9F4"></div>
<div class="a" style="left:872px;top:468px;width:15px;height:16px;background:linear-gradient(#C9D8FC,#B6C8F5);border:1px solid #fff;border-radius:2px"></div>
<svg style="left:875px;top:472px" width="8" height="9" viewBox="0 0 8 9"><path d="M5.5 1L2 4.5 5.5 8" stroke="#4D6185" stroke-width="1.8" fill="none"/></svg>
<div class="a" style="left:888px;top:468px;width:76px;height:16px;background:linear-gradient(#C9D8FC,#B8CAF6);border:1px solid #fff;border-radius:2px"></div>
<div class="a" style="left:922px;top:472px;width:1px;height:7px;background:#8FA6DC"></div>
<div class="a" style="left:924px;top:472px;width:1px;height:7px;background:#8FA6DC"></div>
<div class="a" style="left:926px;top:472px;width:1px;height:7px;background:#8FA6DC"></div>
<div class="a" style="left:928px;top:472px;width:1px;height:7px;background:#8FA6DC"></div>
<div class="a" style="left:1000px;top:468px;width:15px;height:16px;background:linear-gradient(#C9D8FC,#B6C8F5);border:1px solid #fff;border-radius:2px"></div>
<svg style="left:1004px;top:472px" width="8" height="9" viewBox="0 0 8 9"><path d="M2.5 1L6 4.5 2.5 8" stroke="#4D6185" stroke-width="1.8" fill="none"/></svg>
<div class="a" style="left:924px;top:150px;width:37px;height:16px;background:#ECE9D8"></div>
<div class="a" style="left:885px;top:159px;width:1px;height:33px;background:repeating-linear-gradient(#A8A8A8 0 1px,transparent 1px 2px)"></div>
<div class="a" style="left:885px;top:159px;width:15px;height:1px;background:repeating-linear-gradient(90deg,#A8A8A8 0 1px,transparent 1px 2px)"></div>
<div class="a" style="left:890px;top:176px;width:10px;height:1px;background:repeating-linear-gradient(90deg,#A8A8A8 0 1px,transparent 1px 2px)"></div>
<div class="a" style="left:890px;top:193px;width:10px;height:1px;background:repeating-linear-gradient(90deg,#A8A8A8 0 1px,transparent 1px 2px)"></div>
<div class="a" style="left:910px;top:201px;width:1px;height:77px;background:repeating-linear-gradient(#A8A8A8 0 1px,transparent 1px 2px)"></div>
<div class="a" style="left:910px;top:210px;width:16px;height:1px;background:repeating-linear-gradient(90deg,#A8A8A8 0 1px,transparent 1px 2px)"></div>
<div class="a" style="left:910px;top:227px;width:16px;height:1px;background:repeating-linear-gradient(90deg,#A8A8A8 0 1px,transparent 1px 2px)"></div>
<div class="a" style="left:910px;top:261px;width:16px;height:1px;background:repeating-linear-gradient(90deg,#A8A8A8 0 1px,transparent 1px 2px)"></div>
<div class="a" style="left:910px;top:278px;width:16px;height:1px;background:repeating-linear-gradient(90deg,#A8A8A8 0 1px,transparent 1px 2px)"></div>
<div class="a" style="left:915px;top:244px;width:7px;height:1px;background:repeating-linear-gradient(90deg,#A8A8A8 0 1px,transparent 1px 2px)"></div>
<div class="exp p" style="left:881px;top:171px"></div>
<div class="exp" style="left:881px;top:188px"></div>
<div class="exp p" style="left:906px;top:239px"></div>
<svg style="left:902px;top:151px" width="13" height="14" viewBox="0 0 13 14"><rect x="1" y="1" width="11" height="12" fill="#C8C4A8" stroke="#8A866A"/><path d="M6.5 1v12M1 7h11" stroke="#6A664A"/></svg>
<svg style="left:900px;top:167px" width="16" height="16" viewBox="0 0 16 16"><path d="M1 3L4 0v3z" fill="#333"/><path d="M6 5h8M8 8h6M6 11h8M8 14h6" stroke="#5A5A5A"/></svg>
<svg style="left:899px;top:184px" width="23" height="16" viewBox="0 0 23 16"><circle cx="7" cy="7" r="6.3" fill="#4E9E56" stroke="#2A6E32"/><path d="M9.5 4.8a3 3 0 1 0 0 4.4" stroke="#fff" stroke-width="1.8" fill="none"/><rect x="15.5" y="8.5" width="5" height="6" rx="1.5" fill="#F0C040" stroke="#B08820" stroke-width="0.8"/></svg>
<div class="t" style="left:925px;top:152px;">COMM</div>
<div class="t" style="left:925px;top:169px;">import declarations</div>
<div class="t" style="left:925px;top:186px;">Cliente</div>
<div class="t" style="left:965px;top:186px;">1.4</div>
<div class="t" style="left:988px;top:186px;">(ASCII -kkv</div>
<svg style="left:928px;top:205px" width="9" height="9" viewBox="0 0 9 9"><circle cx="4.5" cy="4.5" r="3" fill="#fff" stroke="#3A8A60" stroke-width="1.6"/></svg>
<div class="t" style="left:951px;top:203px;">sRef : String</div>
<svg style="left:928px;top:222px" width="9" height="9" viewBox="0 0 9 9"><circle cx="4.5" cy="4.5" r="4" fill="#58B060" stroke="#3A8A40"/></svg>
<div class="t" style="left:939px;top:216px;font-size:9px;color:#B03050;line-height:10px;letter-spacing:0">S</div>
<svg style="left:928px;top:256px" width="9" height="9" viewBox="0 0 9 9"><circle cx="4.5" cy="4.5" r="4" fill="#58B060" stroke="#3A8A40"/></svg>
<div class="t" style="left:939px;top:250px;font-size:9px;color:#B03050;line-height:10px;letter-spacing:0">S</div>
<svg style="left:928px;top:273px" width="9" height="9" viewBox="0 0 9 9"><circle cx="4.5" cy="4.5" r="4" fill="#58B060" stroke="#3A8A40"/></svg>
<div class="t" style="left:939px;top:267px;font-size:9px;color:#B03050;line-height:10px;letter-spacing:0">S</div>
<svg style="left:923px;top:235px" width="15" height="15" viewBox="0 0 15 15"><circle cx="7.5" cy="7.5" r="6.5" fill="#A87838" stroke="#704818"/><text x="4.5" y="11" font-size="9" font-weight="bold" font-family="Liberation Sans" fill="#fff">E</text></svg>
<div class="t" style="left:951px;top:220px;">lePorta(String</div>
<div class="t" style="left:951px;top:237px;">Season</div>
<div class="t" style="left:951px;top:254px;">TestaRef(Ref</div>
<div class="t" style="left:951px;top:271px;">main(String[])</div>
<div class="a" style="left:1017px;top:149px;width:1px;height:335px;background:#fff"></div>
<div class="a" style="left:1018px;top:123px;width:1px;height:364px;background:#A5A18E"></div>
<div class="a" style="left:1019px;top:99px;width:5px;height:388px;background:#ECE9D8"></div>
<div class="a" style="left:260px;top:490px;width:759px;height:219px;border:1px solid #A5A18E;border-radius:7px 7px 0 0;background:#ECE9D8"></div>
<div class="a" style="left:310px;top:491px;width:1px;height:22px;background:#C9C5B2"></div>
<div class="a" style="left:357px;top:491px;width:1px;height:22px;background:#C9C5B2"></div>
<div class="a" style="left:421px;top:491px;width:1px;height:22px;background:#C9C5B2"></div>
<div class="a" style="left:461px;top:491px;width:1px;height:22px;background:#C9C5B2"></div>
<div class="a" style="left:506px;top:491px;width:1px;height:22px;background:#C9C5B2"></div>
<div class="a" style="left:571px;top:491px;width:1px;height:22px;background:#C9C5B2"></div>
<div class="a" style="left:636px;top:491px;width:1px;height:22px;background:#C9C5B2"></div>
<div class="a" style="left:682px;top:491px;width:1px;height:22px;background:#C9C5B2"></div>
<div class="t" style="left:264px;top:497px;">Problems</div>
<div class="t" style="left:315px;top:497px;">Javadoc</div>
<div class="t" style="left:362px;top:497px;">Declaration</div>
<div class="t" style="left:425px;top:497px;">Search</div>
<div class="t" style="left:465px;top:497px;">Console</div>
<div class="t" style="left:511px;top:497px;">Expressions</div>
<div class="t" style="left:576px;top:497px;">Synchronize</div>
<div class="t" style="left:642px;top:497px;">History</div>
<svg style="left:682px;top:491px" width="336" height="23" viewBox="0 0 336 23"><path d="M0 22 V6 Q0 0 6 0 H94 C110 0 110 22 126 22 Z" fill="url(#tabg)"/><path d="M0.5 22 V6 Q0.5 0.5 6 0.5 H94 C110 0.5 110 22.5 126 22.5 H336" stroke="#B2AE9B" fill="none"/></svg>
<svg style="left:687px;top:494px" width="13" height="14" viewBox="0 0 13 14"><circle cx="3.5" cy="3" r="2" fill="#5A7AB0"/><circle cx="9.5" cy="3" r="2" fill="#5A7AB0"/><path d="M1 6h5v6H1zM7 6h5v6H7z" fill="#A8C0E0" stroke="#3A5A90"/><path d="M3.5 6v7M9.5 6v7" stroke="#3A5A90"/></svg>
<div class="t" style="left:704px;top:497px;">CVS Editors</div>
<svg style="left:768px;top:497px" width="10" height="10" viewBox="0 0 10 10"><path d="M1 1l8 8M9 1L1 9" stroke="#8E8C80" stroke-width="2.4"/><path d="M1 1l8 8M9 1L1 9" stroke="#fff" stroke-width="0.9"/></svg>
<div class="minb" style="left:984px;top:494px;width:10px;height:5px"></div>
<div class="maxb" style="left:1002px;top:495px;width:10px;height:10px"></div>
<div class="a" style="left:261px;top:513px;width:757px;height:1px;background:#A5A18E"></div>
<div class="a" style="left:263px;top:514px;width:754px;height:21px;background:linear-gradient(#EFEDE2,#F2F0E6 70%,#E3E0D0)"></div>
<div class="a" style="left:263px;top:534px;width:754px;height:1px;background:#D8D4C2"></div>
<div class="a" style="left:484px;top:518px;width:1px;height:14px;background:#C9C5B2"></div>
<div class="a" style="left:485px;top:518px;width:1px;height:14px;background:#fff"></div>
<div class="a" style="left:632px;top:518px;width:1px;height:14px;background:#C9C5B2"></div>
<div class="a" style="left:633px;top:518px;width:1px;height:14px;background:#fff"></div>
<div class="a" style="left:853px;top:518px;width:1px;height:14px;background:#C9C5B2"></div>
<div class="a" style="left:854px;top:518px;width:1px;height:14px;background:#fff"></div>
<div class="a" style="left:999px;top:518px;width:1px;height:14px;background:#C9C5B2"></div>
<div class="a" style="left:1000px;top:518px;width:1px;height:14px;background:#fff"></div>
<div class="t" style="left:272px;top:520px;">File name</div>
<div class="t" style="left:493px;top:520px;">User name</div>
<div class="t" style="left:642px;top:520px;">Date</div>
<div class="t" style="left:863px;top:520px;">Computer name</div>
<div class="a" style="left:263px;top:535px;width:754px;height:172px;background:#fff"></div>
<div class="a" style="left:263px;top:549px;width:754px;height:1px;background:#E4E4E2"></div>
<div class="a" style="left:263px;top:563px;width:754px;height:1px;background:#E4E4E2"></div>
<div class="a" style="left:263px;top:577px;width:754px;height:1px;background:#E4E4E2"></div>
<div class="a" style="left:263px;top:591px;width:754px;height:1px;background:#E4E4E2"></div>
<div class="a" style="left:263px;top:605px;width:754px;height:1px;background:#E4E4E2"></div>
<div class="a" style="left:263px;top:619px;width:754px;height:1px;background:#E4E4E2"></div>
<div class="a" style="left:263px;top:633px;width:754px;height:1px;background:#E4E4E2"></div>
<div class="a" style="left:263px;top:647px;width:754px;height:1px;background:#E4E4E2"></div>
<div class="a" style="left:263px;top:661px;width:754px;height:1px;background:#E4E4E2"></div>
<div class="a" style="left:263px;top:675px;width:754px;height:1px;background:#E4E4E2"></div>
<div class="a" style="left:263px;top:689px;width:754px;height:1px;background:#E4E4E2"></div>
<div class="a" style="left:263px;top:703px;width:754px;height:1px;background:#E4E4E2"></div>
<div class="a" style="left:485px;top:535px;width:1px;height:172px;background:#E4E4E2"></div>
<div class="a" style="left:633px;top:535px;width:1px;height:172px;background:#E4E4E2"></div>
<div class="a" style="left:854px;top:535px;width:1px;height:172px;background:#E4E4E2"></div>
<div class="a" style="left:1001px;top:535px;width:1px;height:172px;background:#E4E4E2"></div>
<div class="t" style="left:269px;top:537px;">COMM/Cliente.java</div>
<div class="t" style="left:490px;top:537px;">ac</div>
<div class="t" style="left:640px;top:537px;">19 Oct 2006 11:53:21 GMT</div>
<div class="t" style="left:860px;top:537px;">Volans02</div>
<div class="a" style="left:278px;top:711px;width:1px;height:22px;background:#ACA899"></div>
<div class="a" style="left:279px;top:711px;width:1px;height:22px;background:#fff"></div>
<div class="a" style="left:367px;top:711px;width:1px;height:22px;background:#ACA899"></div>
<div class="a" style="left:368px;top:711px;width:1px;height:22px;background:#fff"></div>
<div class="a" style="left:451px;top:711px;width:1px;height:22px;background:#ACA899"></div>
<div class="a" style="left:452px;top:711px;width:1px;height:22px;background:#fff"></div>
<div class="t" style="left:286px;top:716px;">Read-Only</div>
<div class="t" style="left:375px;top:716px;">Smart Insert</div>
<div class="t" style="left:460px;top:716px;">10 : 1</div>
<div class="a" style="left:539px;top:715px;width:2px;height:14px;background:repeating-linear-gradient(#A8A490 0 2px,transparent 2px 4px)"></div>
<div class="a" style="left:802px;top:715px;width:2px;height:14px;background:repeating-linear-gradient(#A8A490 0 2px,transparent 2px 4px)"></div>
<div class="a" style="left:881px;top:715px;width:2px;height:14px;background:repeating-linear-gradient(#A8A490 0 2px,transparent 2px 4px)"></div>
<svg style="left:817px;top:716px" width="16" height="13" viewBox="0 0 16 13"><rect x="0.5" y="2.5" width="6" height="10" fill="#fff" stroke="#555"/><rect x="1" y="3" width="5" height="2" fill="#4A68A8"/><path d="M11 0v8M7 4h8" stroke="#E0B040" stroke-width="1.6"/></svg>
<div class="a" style="left:894px;top:716px;width:122px;height:13px;background:#0B8A12"></div>
<div class="t" style="left:899px;top:716px;color:#D4F6D4;letter-spacing:-0.25px">Read Me Trim (Bottom)</div>
<div class="a" style="left:0px;top:733px;width:1024px;height:1px;background:#F2F4F8"></div>
<div class="a" style="left:0px;top:734px;width:1024px;height:34px;background:linear-gradient(#2E62CC 0,#2E62CC 1px,#3C7EEE 2px,#3A7CF0 3px,#2E69E4 5px,#245EDC 8px,#245DDB 29px,#1F52C8 32px,#1A47B8 34px)"></div>
<div class="a" style="left:0px;top:738px;width:108px;height:30px;border-radius:0 10px 0 0;background:linear-gradient(#6DBE6D 0,#58AE58 2px,#40A040 5px,#389A38 14px,#3A9C3A 22px,#2F8A2F 30px);box-shadow:inset -3px 0 3px #2A7A2A,inset 2px 0 2px #2E8A2E"></div>
<svg style="left:11px;top:744px" width="19" height="17" viewBox="0 0 19 17"><path d="M1 4Q4 0 9 3L8 8Q4 6 1 9z" fill="#F05A28"/><path d="M10 3Q14 5 18 2L17 7Q13 9 9 8z" fill="#7CBB2C"/><path d="M0.5 10Q4 7 8 9L7 14Q3 12 0 15z" fill="#2E8AE8"/><path d="M9 9Q13 11 17 8L16 13Q12 15 8 14z" fill="#F8C020"/></svg>
<div class="t" style="left:35px;top:743px;font-size:17px;font-weight:bold;font-style:italic;color:#fff;line-height:20px;letter-spacing:0;text-shadow:1px 1px 1px #1E4E1E">Iniciar</div>
<div class="a" style="left:118px;top:744px;width:2px;height:22px;background:repeating-linear-gradient(#1838A0 0 2px,transparent 2px 6px)"></div>
<div class="a" style="left:121px;top:747px;width:2px;height:20px;background:repeating-linear-gradient(#1838A0 0 2px,transparent 2px 6px)"></div>
<svg style="left:133px;top:744px" width="15" height="16" viewBox="0 0 15 16"><path d="M13 5C12 1 7 0 4 2 1 4 0 9 2 12c2 3 7 4 10 1" stroke="#8CC8F8" stroke-width="2.4" fill="none"/><path d="M3 8h10" stroke="#8CC8F8" stroke-width="2"/></svg>
<svg style="left:154px;top:744px" width="16" height="16" viewBox="0 0 16 16"><rect x="2" y="2" width="12" height="12" rx="2" fill="#E8F0FF" stroke="#1A3A9A"/><path d="M11 5a4 4 0 1 0 0 6" stroke="#2050C0" stroke-width="2" fill="none"/></svg>
<svg style="left:177px;top:744px" width="16" height="16" viewBox="0 0 16 16"><rect x="0.5" y="0.5" width="15" height="15" fill="#F8E0A0" stroke="#C08830"/><circle cx="8" cy="8" r="5" fill="#FFF4D0" stroke="#C08830"/><path d="M8 4.5V8h3" stroke="#C08830" stroke-width="1.2" fill="none"/></svg>
<svg style="left:205px;top:744px" width="9" height="6" viewBox="0 0 9 6"><path d="M0.5 0.5l3 2.5-3 2.5M4.5 0.5l3 2.5-3 2.5" stroke="#C8D8F8" stroke-width="1" fill="none"/></svg>
<div class="a" style="left:221px;top:744px;width:2px;height:22px;background:repeating-linear-gradient(#1838A0 0 2px,transparent 2px 6px)"></div>
<div class="a" style="left:224px;top:747px;width:2px;height:20px;background:repeating-linear-gradient(#1838A0 0 2px,transparent 2px 6px)"></div>
<div class="a" style="left:232px;top:742px;width:90px;height:24px;border-radius:3px;background:linear-gradient(#4A8CF6,#3C81F3 4px,#3A7EF0 20px,#3170E6);box-shadow:inset -1px -1px 0 #2A60D0,inset 1px 1px 0 #66A0F8"></div>
<svg style="left:240px;top:746px" width="16" height="16" viewBox="0 0 16 16"><rect x="0.5" y="0.5" width="15" height="15" fill="#F8E0A0" stroke="#C08830"/><circle cx="8" cy="8" r="5" fill="#FFF4D0" stroke="#C08830"/><path d="M8 4.5V8h3" stroke="#C08830" stroke-width="1.2" fill="none"/></svg>
<div class="t" style="left:261px;top:748px;color:#fff;font-size:11px;letter-spacing:0.1px">Caixa d...</div>
<div class="a" style="left:325px;top:742px;width:88px;height:24px;border-radius:3px;background:linear-gradient(#4A8CF6,#3C81F3 4px,#3A7EF0 20px,#3170E6);box-shadow:inset -1px -1px 0 #2A60D0,inset 1px 1px 0 #66A0F8"></div>
<svg style="left:333px;top:746px" width="16" height="16" viewBox="0 0 16 16"><path d="M1 3h5l1 2h8v9H1z" fill="#F0D890" stroke="#A88838"/><path d="M3 7h12l-2 7H1z" fill="#F8E8B0" stroke="#A88838"/></svg>
<div class="t" style="left:354px;top:748px;color:#fff;font-size:11px;letter-spacing:0.1px">D:\Proj...</div>
<div class="a" style="left:418px;top:742px;width:88px;height:24px;border-radius:3px;background:linear-gradient(#4A8CF6,#3C81F3 4px,#3A7EF0 20px,#3170E6);box-shadow:inset -1px -1px 0 #2A60D0,inset 1px 1px 0 #66A0F8"></div>
<svg style="left:426px;top:746px" width="16" height="16" viewBox="0 0 16 16"><rect x="2" y="4" width="12" height="11" fill="#fff" stroke="#555"/><path d="M1 1h10l3 4H3z" fill="#C02020"/><path d="M4 9h8M4 12h8" stroke="#888"/></svg>
<div class="t" style="left:447px;top:748px;color:#fff;font-size:11px;letter-spacing:0.1px">EditPlus...</div>
<div class="a" style="left:510px;top:742px;width:94px;height:24px;border-radius:3px;background:#1E4DBF;box-shadow:inset 1px 1px 1px #173C98"></div>
<svg style="left:518px;top:746px" width="16" height="16" viewBox="0 0 16 16"><defs><linearGradient id="eg3" x1="0" y1="0" x2="0" y2="1"><stop offset="0" stop-color="#E8B8D8"/><stop offset="1" stop-color="#3A2A7A"/></linearGradient></defs><ellipse cx="8" cy="8" rx="7" ry="6.5" fill="url(#eg3)"/><path d="M1 6.5h14M1 9h14" stroke="#F0E8F8" stroke-width="1.1"/></svg>
<div class="t" style="left:539px;top:748px;color:#fff;font-size:11px;letter-spacing:0.1px">Java - ...</div>
<div class="a" style="left:607px;top:742px;width:89px;height:24px;border-radius:3px;background:linear-gradient(#4A8CF6,#3C81F3 4px,#3A7EF0 20px,#3170E6);box-shadow:inset -1px -1px 0 #2A60D0,inset 1px 1px 0 #66A0F8"></div>
<svg style="left:615px;top:746px" width="16" height="16" viewBox="0 0 16 16"><rect x="4" y="1" width="11" height="14" fill="#fff" stroke="#555"/><path d="M6 4h7M6 7h7M6 10h7" stroke="#888"/><path d="M9 3C8 1 3 1 2 4 1 7 2 11 5 12 7 13 9 12 10 10" stroke="#2E6AD8" stroke-width="2" fill="none"/></svg>
<div class="t" style="left:636px;top:748px;color:#fff;font-size:11px;letter-spacing:0.1px">Novo T...</div>
<div class="a" style="left:699px;top:742px;width:92px;height:24px;border-radius:3px;background:linear-gradient(#4A8CF6,#3C81F3 4px,#3A7EF0 20px,#3170E6);box-shadow:inset -1px -1px 0 #2A60D0,inset 1px 1px 0 #66A0F8"></div>
<svg style="left:707px;top:746px" width="16" height="16" viewBox="0 0 16 16"><path d="M4 2l3 3 2-4 2 4 3-2-2 12H5z" fill="#D88898" stroke="#6A4050"/><path d="M6 8h5" stroke="#F8F0A0" stroke-width="2"/></svg>
<div class="t" style="left:728px;top:748px;color:#fff;font-size:11px;letter-spacing:0.1px">imagem...</div>
<div class="a" style="left:805px;top:736px;width:219px;height:32px;background:linear-gradient(#1EA0F8 0,#1596EE 4px,#0F8BE6 28px,#0C7BD4 34px);box-shadow:inset 1px 0 1px #0B5FC0"></div>
<svg style="left:816px;top:746px" width="16" height="16" viewBox="0 0 16 16"><path d="M8 1l6 2v5c0 4-3 6-6 7-3-1-6-3-6-7V3z" fill="#6CC838" stroke="#2E8A10"/><path d="M4.5 8l2.5 3 5-6" stroke="#fff" stroke-width="1.6" fill="none"/></svg>
<svg style="left:835px;top:745px" width="16" height="17" viewBox="0 0 16 17"><rect x="0.5" y="0.5" width="15" height="15" fill="#F8E0A0" stroke="#C08830"/><circle cx="8" cy="8" r="5" fill="#FFF4D0" stroke="#C08830"/><path d="M8 4.5V8h3" stroke="#C08830" stroke-width="1.2" fill="none"/></svg>
<svg style="left:857px;top:746px" width="15" height="16" viewBox="0 0 15 16"><circle cx="7.5" cy="4.5" r="3.5" fill="#90D060"/><path d="M1 15c0-5 3-7 6.5-7S14 10 14 15z" fill="#5AB038"/></svg>
<svg style="left:873px;top:746px" width="16" height="16" viewBox="0 0 16 16"><rect x="0" y="0" width="8" height="8" fill="#F8E010"/><rect x="8" y="0" width="8" height="8" fill="#101010"/><rect x="0" y="8" width="8" height="8" fill="#10A010"/><rect x="8" y="8" width="8" height="8" fill="#E01010"/></svg>
<svg style="left:889px;top:745px" width="16" height="17" viewBox="0 0 16 17"><rect x="0" y="0" width="8" height="17" fill="#C8102E"/><rect x="8" y="0" width="8" height="17" fill="#F0C020"/><text x="0.5" y="14" font-size="12" font-weight="bold" font-family="Liberation Sans" fill="#fff">Z</text><text x="8" y="14" font-size="12" font-weight="bold" font-family="Liberation Sans" fill="#8A1010">A</text></svg>
<svg style="left:906px;top:745px" width="16" height="17" viewBox="0 0 16 17"><rect x="1" y="1" width="14" height="10" fill="#88B8E8" stroke="#3A6AA8"/><path d="M3 3h2M7 3h2M11 3h2M3 6h2M7 6h2M11 6h2" stroke="#fff"/><path d="M4 11l3 4 7-8" stroke="#38B838" stroke-width="2.2" fill="none"/></svg>
<svg style="left:926px;top:746px" width="15" height="15" viewBox="0 0 15 15"><circle cx="7.5" cy="7.5" r="6.5" fill="#383848"/><circle cx="5.5" cy="5" r="2.5" fill="#C8C8D8"/><path d="M10 2l4 1" stroke="#E8E8F8"/></svg>
<svg style="left:942px;top:746px" width="17" height="16" viewBox="0 0 17 16"><rect x="0" y="0" width="17" height="16" fill="#F8F8E8"/><path d="M2 12c3-8 10-8 13-4M4 13c2-5 7-6 9-3" stroke="#76B900" stroke-width="2" fill="none"/><rect x="0" y="0" width="17" height="16" fill="none" stroke="#404030"/></svg>
<svg style="left:960px;top:745px" width="16" height="17" viewBox="0 0 16 17"><rect x="0.5" y="0.5" width="15" height="16" fill="#1030C8" stroke="#E8E8F8"/><path d="M4 3l9 5.5-9 5.5z" fill="#fff"/></svg>
<div class="t" style="left:983px;top:748px;color:#E8F4FF;font-size:12px;letter-spacing:0.2px">09:24</div>
<div class="a" style="left:226px;top:215px;width:573px;height:228px;border-radius:7px 7px 0 0;background:linear-gradient(90deg,#0842D0,#0A4BDF 3px,#0A4BDF 569px,#0838B8 573px)"></div>
<div class="a" style="left:226px;top:440px;width:573px;height:3px;background:#0B2C9A"></div>
<div class="a" style="left:796px;top:244px;width:3px;height:199px;background:#0B2C9A"></div>
<div class="a" style="left:226px;top:244px;width:3px;height:199px;background:#0A44CF"></div>
<div class="a" style="left:229px;top:216px;width:567px;height:28px;border-radius:5px 5px 0 0;background:linear-gradient(#3E8EF8 0,#1A6AF4 2px,#0B5CEC 5px,#0A56E6 14px,#0A52E4 22px,#0A4CDB 26px,#0A44CE 28px)"></div>
<svg style="left:232px;top:224px" width="15" height="13" viewBox="0 0 15 13"><defs><linearGradient id="eg4" x1="0" y1="0" x2="0" y2="1"><stop offset="0" stop-color="#F0C8E0"/><stop offset="0.5" stop-color="#8A6AB0"/><stop offset="1" stop-color="#2A1A6A"/></linearGradient></defs><ellipse cx="7.5" cy="6.5" rx="7" ry="6.3" fill="url(#eg4)"/><path d="M1 5h13M1 8h13" stroke="#F4EEF8" stroke-width="1.2"/></svg>
<div class="t" style="left:251px;top:223px;font-size:13px;font-weight:bold;color:#fff;line-height:16px;letter-spacing:0;text-shadow:1px 1px 0 #0A2A90">Editors</div>
<div class="a" style="left:773px;top:220px;width:21px;height:21px;border:1px solid #fff;border-radius:3px;background:linear-gradient(135deg,#F08868,#D8482A 60%,#C03818)"></div>
<svg style="left:777px;top:224px" width="13" height="13" viewBox="0 0 13 13"><path d="M2.5 2.5L10.5 10.5M10.5 2.5L2.5 10.5" stroke="#fff" stroke-width="2"/></svg>
<div class="a" style="left:229px;top:244px;width:567px;height:196px;background:#ECE9D8"></div>
<div class="a" style="left:229px;top:244px;width:1px;height:196px;background:#F4F8FC"></div>
<div class="t" style="left:238px;top:255px;letter-spacing:-0.06px">The resource already has editors. Do you still want to edit the resource and send a CVS edit notification to server?</div>
<div class="a" style="left:231px;top:280px;width:563px;height:19px;background:linear-gradient(#ECEAE0,#F0EEE6 60%,#E6E4D6)"></div>
<div class="a" style="left:398px;top:282px;width:1px;height:14px;background:#C9C5B2"></div>
<div class="a" style="left:399px;top:282px;width:1px;height:14px;background:#fff"></div>
<div class="a" style="left:511px;top:282px;width:1px;height:14px;background:#C9C5B2"></div>
<div class="a" style="left:512px;top:282px;width:1px;height:14px;background:#fff"></div>
<div class="a" style="left:681px;top:282px;width:1px;height:14px;background:#C9C5B2"></div>
<div class="a" style="left:682px;top:282px;width:1px;height:14px;background:#fff"></div>
<div class="t" style="left:238px;top:283px;">File name</div>
<div class="t" style="left:408px;top:283px;">User name</div>
<div class="t" style="left:521px;top:283px;">Date</div>
<div class="t" style="left:692px;top:283px;">Computer name</div>
<div class="a" style="left:231px;top:299px;width:563px;height:97px;background:#fff"></div>
<div class="a" style="left:231px;top:312px;width:563px;height:1px;background:#E6E6E4"></div>
<div class="a" style="left:231px;top:326px;width:563px;height:1px;background:#E6E6E4"></div>
<div class="a" style="left:231px;top:340px;width:563px;height:1px;background:#E6E6E4"></div>
<div class="a" style="left:231px;top:354px;width:563px;height:1px;background:#E6E6E4"></div>
<div class="a" style="left:231px;top:368px;width:563px;height:1px;background:#E6E6E4"></div>
<div class="a" style="left:231px;top:382px;width:563px;height:1px;background:#E6E6E4"></div>
<div class="a" style="left:400px;top:299px;width:1px;height:97px;background:#E6E6E4"></div>
<div class="a" style="left:513px;top:299px;width:1px;height:97px;background:#E6E6E4"></div>
<div class="a" style="left:683px;top:299px;width:1px;height:97px;background:#E6E6E4"></div>
<div class="a" style="left:233px;top:299px;width:561px;height:14px;border:1px dotted #333;border-right:none;border-bottom:none"></div>
<div class="t" style="left:234px;top:300px;">COMM/Cliente.java</div>
<div class="t" style="left:406px;top:300px;">ac</div>
<div class="t" style="left:520px;top:300px;">19 Oct 2006 11:53:21 GMT</div>
<div class="t" style="left:689px;top:300px;">Volans02</div>
<svg style="left:242px;top:411px" width="15" height="15" viewBox="0 0 15 15"><circle cx="7.5" cy="7.5" r="6.5" fill="#F4F6FA" stroke="#4A5A6A" stroke-width="1.2"/><text x="4" y="12" font-size="10" font-weight="bold" font-family="Liberation Sans" fill="#38485A">?</text></svg>
<div class="a" style="left:631px;top:408px;width:74px;height:21px;border:1px solid #003C74;border-radius:3px;background:linear-gradient(#FFFFFF,#F4F4EE 50%,#E8E8E0);box-shadow:inset 0 -2px 0 #6A8AD8,inset 0 2px 0 #CEE0FA,inset 2px 0 0 #B8D0F8,inset -2px 0 0 #B8D0F8"></div>
<div class="t" style="left:660px;top:413px;letter-spacing:0">OK</div>
<div class="a" style="left:712px;top:408px;width:74px;height:21px;border:1px solid #003C74;border-radius:3px;background:linear-gradient(#FFFFFF,#F4F4EE 50%,#E6E4DA)"></div>
<div class="t" style="left:732px;top:413px;letter-spacing:0">Cancel</div>
</div></body></html>
